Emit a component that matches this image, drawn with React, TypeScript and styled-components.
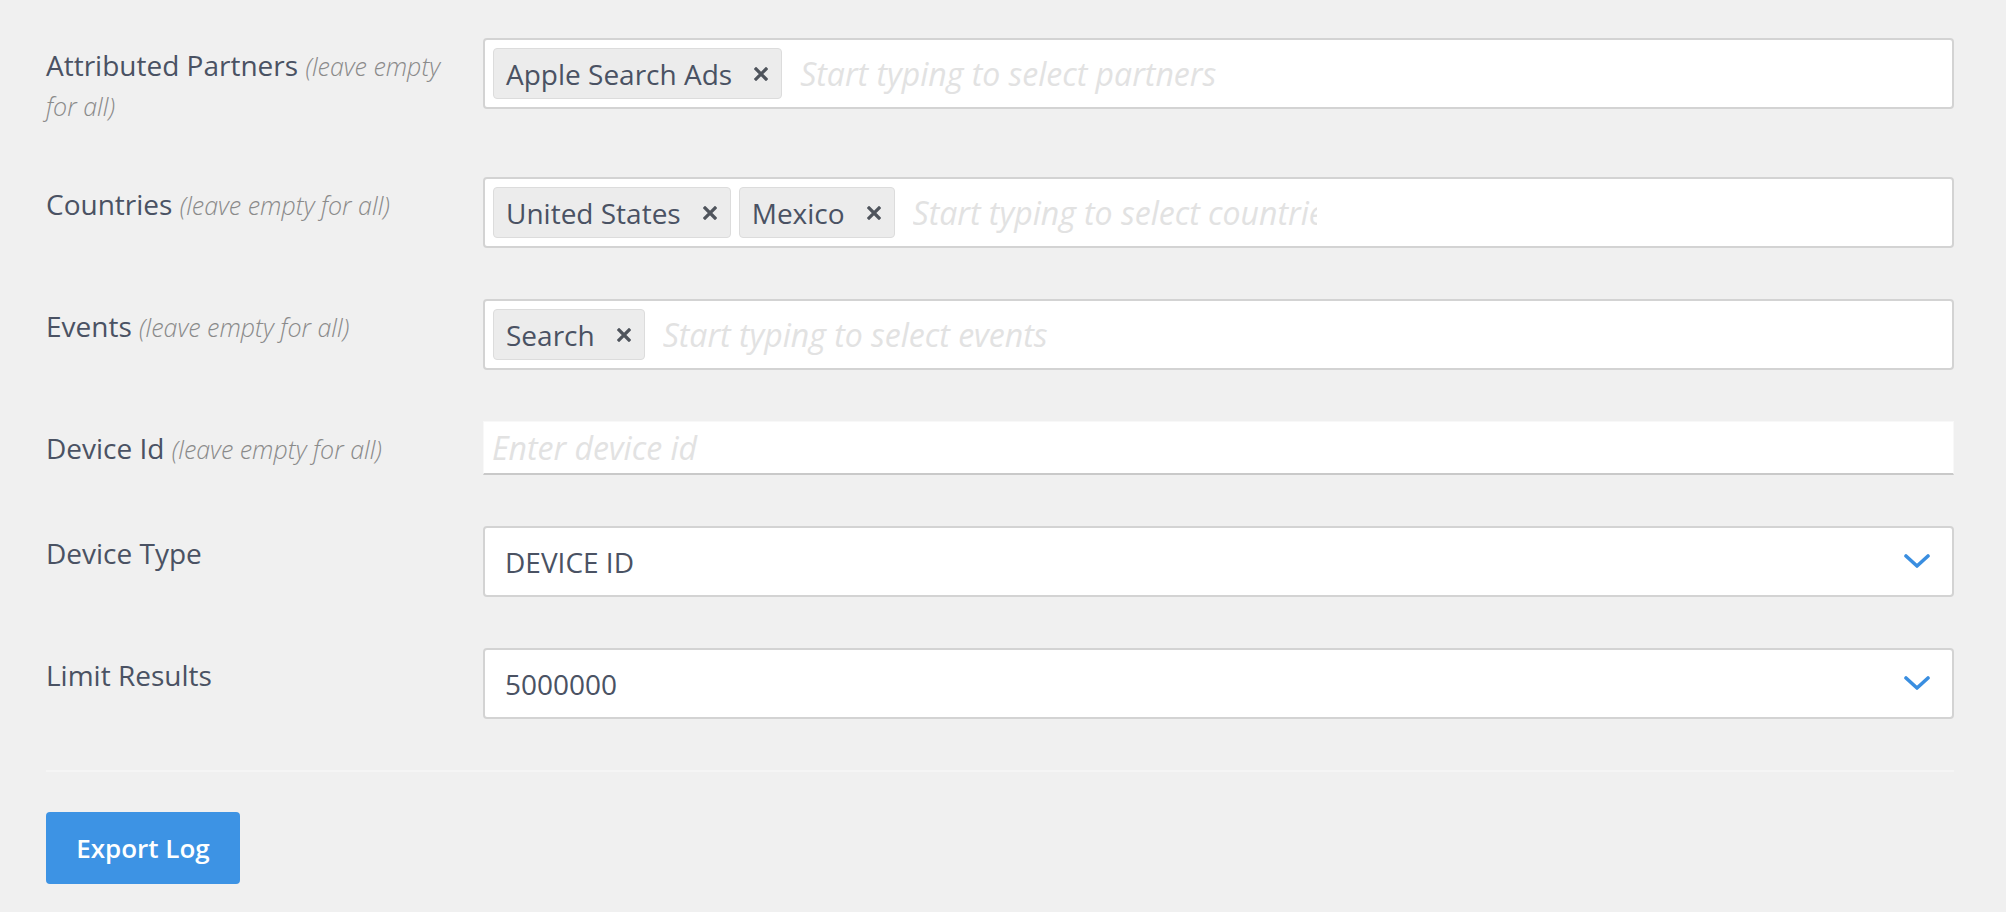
import React from 'react';
import styled, { createGlobalStyle } from 'styled-components';

const GlobalStyle = createGlobalStyle`
  html, body {
    margin: 0;
    padding: 0;
    background: #f0f0f0;
  }
  body {
    font-family: "Open Sans", "Liberation Sans", sans-serif;
    color: #4a5263;
  }
`;

const Page = styled.div`
  padding: 38px 52px 28px 46px;
`;

const Form = styled.div`
  display: flex;
  flex-direction: column;
  gap: 51px;
`;

const Row = styled.div`
  display: grid;
  grid-template-columns: 437px 1fr;
  align-items: start;
`;

const Label = styled.label`
  max-width: 412px;
  padding-top: 8px;
  font-size: 28px;
  line-height: 39px;
  color: #4a5263;
`;

const Hint = styled.span`
  font-style: italic;
  font-weight: 300;
  font-size: 25px;
  color: #8a8a8a;
`;

const Box = styled.div`
  box-sizing: border-box;
  height: 71px;
  display: flex;
  align-items: center;
  gap: 8px;
  padding: 0 8px;
  background: #fff;
  border: 2px solid #d3d3d3;
  border-radius: 4px;
  overflow: hidden;
`;

const Tag = styled.span`
  box-sizing: border-box;
  flex: none;
  height: 51px;
  display: inline-flex;
  align-items: center;
  gap: 22px;
  padding: 0 13px 0 12px;
  background: #ececec;
  border: 1px solid #dcdcdc;
  border-radius: 4px;
  font-size: 28px;
  color: #4a5263;
`;

const TypeAhead = styled.input<{ $w?: number }>`
  flex: ${(p) => (p.$w ? 'none' : '1')};
  width: ${(p) => (p.$w ? `${p.$w}px` : 'auto')};
  min-width: 0;
  margin-left: 10px;
  border: none;
  outline: none;
  background: transparent;
  font-family: inherit;
  font-size: 32px;
  color: #4a5263;
  padding: 0;
  &::placeholder {
    color: #e2e2e2;
    font-style: italic;
  }
`;

const PlainInput = styled.input`
  box-sizing: border-box;
  width: 100%;
  height: 54px;
  padding: 0 8px;
  background: #fff;
  border: 1px solid #f8f8f8;
  border-bottom: 2px solid #c9c9c9;
  outline: none;
  font-family: inherit;
  font-size: 32px;
  color: #4a5263;
  &::placeholder {
    color: #e2e2e2;
    font-style: italic;
  }
`;

const Select = styled(Box)`
  justify-content: space-between;
  padding: 0 22px 0 20px;
  font-size: 28px;
  color: #4a5263;
`;

const Divider = styled.hr`
  margin: 51px 0 0;
  border: none;
  border-top: 2px solid #f5f5f5;
`;

const Button = styled.button`
  margin-top: 40px;
  width: 194px;
  height: 72px;
  border: none;
  border-radius: 4px;
  background: #3d93e4;
  color: #fff;
  font-family: inherit;
  font-size: 26px;
  font-weight: 600;
  cursor: pointer;
`;

const Remove = () => (
  <svg width="14" height="14" viewBox="0 0 14 14">
    <path d="M2 2 L12 12 M12 2 L2 12" stroke="#4f545c" strokeWidth="3.2" strokeLinecap="square" />
  </svg>
);

const Chevron = () => (
  <svg width="26" height="15" viewBox="0 0 26 15">
    <path d="M2 2 L13 12 L24 2" fill="none" stroke="#3a8ee0" strokeWidth="3.6" strokeLinecap="round" strokeLinejoin="round" />
  </svg>
);

const TagInput = ({ tags, placeholder, width }: { tags: string[]; placeholder: string; width?: number }) => (
  <Box>
    {tags.map((t) => (
      <Tag key={t}>
        {t}
        <Remove />
      </Tag>
    ))}
    <TypeAhead placeholder={placeholder} $w={width} />
  </Box>
);

const Field = ({ title, hint, children }: { title: string; hint?: string; children: React.ReactNode }) => (
  <Row>
    <Label>
      {title}
      {hint && <> <Hint>{hint}</Hint></>}
    </Label>
    {children}
  </Row>
);

export default function App() {
  return (
    <Page>
      <GlobalStyle />
      <Form>
        <Field title="Attributed Partners" hint="(leave empty for all)">
          <TagInput tags={['Apple Search Ads']} placeholder="Start typing to select partners" />
        </Field>
        <Field title="Countries" hint="(leave empty for all)">
          <TagInput tags={['United States', 'Mexico']} placeholder="Start typing to select countries" width={404} />
        </Field>
        <Field title="Events" hint="(leave empty for all)">
          <TagInput tags={['Search']} placeholder="Start typing to select events" />
        </Field>
        <Field title="Device Id" hint="(leave empty for all)">
          <PlainInput placeholder="Enter device id" />
        </Field>
        <Field title="Device Type">
          <Select>
            <span>DEVICE ID</span>
            <Chevron />
          </Select>
        </Field>
        <Field title="Limit Results">
          <Select>
            <span>5000000</span>
            <Chevron />
          </Select>
        </Field>
      </Form>
      <Divider />
      <Button>Export Log</Button>
    </Page>
  );
}
